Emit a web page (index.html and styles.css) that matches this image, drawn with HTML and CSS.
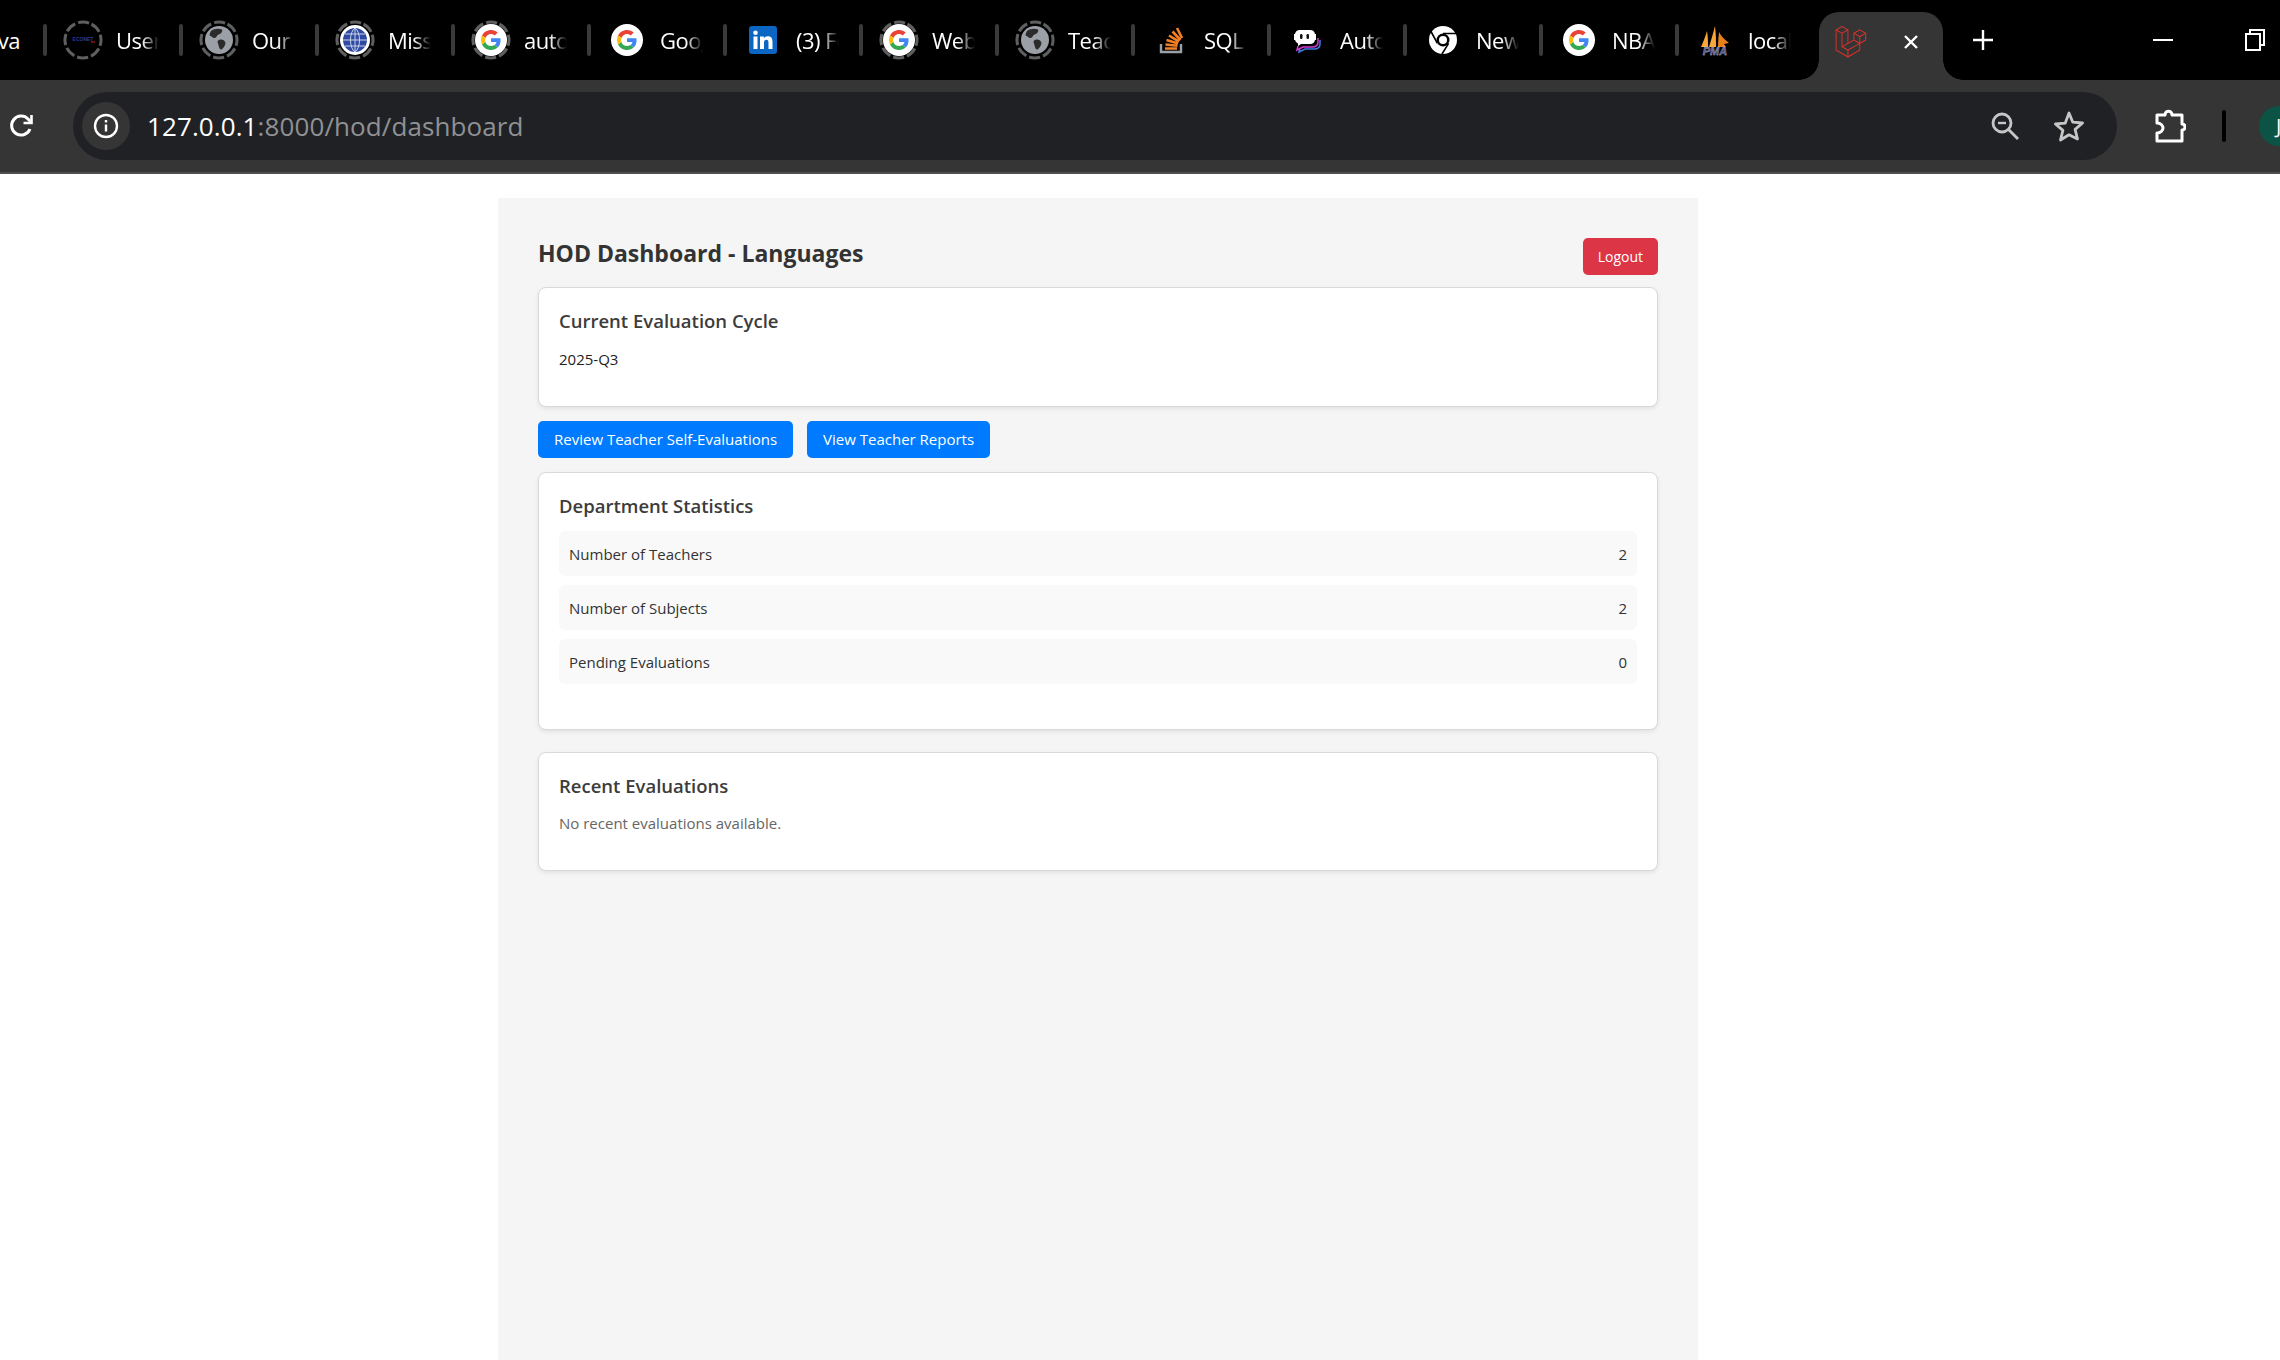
FILE: index.html
```html
<!DOCTYPE html>
<html lang="en">
<head>
  <meta charset="UTF-8" />
  <title>HOD Dashboard</title>
  <link rel="stylesheet" href="styles.css">
</head>
<body>

  <!-- shared favicons -->
  <svg class="defs" width="0" height="0">
    <symbol id="ring" viewBox="0 0 40 40">
      <circle cx="20" cy="20" r="18" fill="none" stroke="#5f5f5f" stroke-width="3" stroke-dasharray="11 3.1" transform="rotate(-62 20 20)"/>
    </symbol>
    <symbol id="google" viewBox="0 0 64 64">
      <circle cx="32" cy="32" r="32" fill="#fff"/>
      <g transform="translate(12 12) scale(.833)">
        <path fill="#EA4335" d="M24 9.5c3.54 0 6.71 1.22 9.21 3.6l6.85-6.85C35.9 2.38 30.47 0 24 0 14.62 0 6.51 5.38 2.56 13.22l7.98 6.19C12.43 13.72 17.74 9.5 24 9.5z"/>
        <path fill="#4285F4" d="M46.98 24.55c0-1.57-.15-3.09-.38-4.55H24v9.02h12.94c-.58 2.96-2.26 5.48-4.78 7.18l7.73 6c4.51-4.18 7.09-10.36 7.09-17.65z"/>
        <path fill="#FBBC05" d="M10.53 28.59c-.48-1.45-.76-2.99-.76-4.59s.27-3.14.76-4.59l-7.98-6.19C.92 16.46 0 20.12 0 24c0 3.88.92 7.54 2.56 10.78l7.97-6.19z"/>
        <path fill="#34A853" d="M24 48c6.48 0 11.93-2.13 15.89-5.81l-7.73-6c-2.15 1.45-4.92 2.3-8.16 2.3-6.26 0-11.57-4.22-13.47-9.91l-7.98 6.19C6.51 42.62 14.62 48 24 48z"/>
      </g>
    </symbol>
    <symbol id="globe" viewBox="0 0 32 32">
      <circle cx="16" cy="16" r="14" fill="#9aa0a6"/>
      <path fill="#2b2b2b" d="M8 7c3-2.500 8-3 11-1.500 1 2-1 4.500-3.500 5-2 .5-1.500 3-3.500 3.500S8.500 12 6.500 11.500C6.800 10 7 8.500 8 7zM15 16.500c2-1.500 5-1 6.500.5 1.500 1.500 1 3.500 0 5-1 1.500-2 3.500-4 3.500-1.500-1-1.500-3-2-4.500-.5-1.500-1.500-3-.5-4.500z"/>
    </symbol>
  </svg>

  <div class="tabstrip">
    <div class="tab tab-first"><span class="tab-title">Java</span></div>
    <div class="tab">
      <svg class="ring"><use href="#ring"/></svg>
      <svg class="favicon" viewBox="0 0 32 32"><text x="16" y="17" class="econet">ECONET</text><path d="M24 18h4" stroke="#c22" stroke-width="1"/></svg>
      <span class="tab-title">Users</span>
    </div>
    <div class="tab">
      <svg class="ring"><use href="#ring"/></svg>
      <svg class="favicon"><use href="#globe"/></svg>
      <span class="tab-title">Our</span>
    </div>
    <div class="tab">
      <svg class="ring"><use href="#ring"/></svg>
      <svg class="favicon" viewBox="0 0 32 32">
        <circle cx="16" cy="16" r="15" fill="#fff"/>
        <circle cx="16" cy="16" r="12" fill="#2f4aa0"/>
        <path d="M4 16h24M16 4v24M6 10h20M6 22h20M16 4c-6 4-6 20 0 24M16 4c6 4 6 20 0 24" fill="none" stroke="#c9d3ee" stroke-width="1"/>
      </svg>
      <span class="tab-title">Mission</span>
    </div>
    <div class="tab">
      <svg class="ring"><use href="#ring"/></svg>
      <svg class="favicon"><use href="#google"/></svg>
      <span class="tab-title">auto</span>
    </div>
    <div class="tab">
      <svg class="favicon"><use href="#google"/></svg>
      <span class="tab-title">Google</span>
    </div>
    <div class="tab">
      <svg class="favicon" viewBox="0 0 32 32">
        <rect x="2" y="2" width="28" height="28" rx="3" fill="#0a66c2"/>
        <path fill="#fff" d="M6.500 12.500h4V25h-4zM8.500 6.500a2.300 2.300 0 1 1 0 4.600 2.300 2.300 0 0 1 0-4.600zM13 12.500h3.800v1.800c.7-1.200 2.200-2.100 4-2.100 3.700 0 4.700 2.300 4.700 5.700V25h-4v-6.300c0-1.700-.5-3-2-3-1.700 0-2.500 1.200-2.500 3V25h-4z"/>
      </svg>
      <span class="tab-title">(3) Feed</span>
    </div>
    <div class="tab">
      <svg class="ring"><use href="#ring"/></svg>
      <svg class="favicon"><use href="#google"/></svg>
      <span class="tab-title">Web</span>
    </div>
    <div class="tab">
      <svg class="ring"><use href="#ring"/></svg>
      <svg class="favicon"><use href="#globe"/></svg>
      <span class="tab-title">Teach</span>
    </div>
    <div class="tab">
      <svg class="favicon" viewBox="0 0 32 32">
        <path d="M6 20v8h20v-8" fill="none" stroke="#9aa0a6" stroke-width="2.400"/>
        <path d="M10 24.500h12M10.500 20.500l12 1.200M11.500 16l11.600 3.400M14 11.500l10 6.200M17.500 7.500l8 8.500M22 4l5 10" fill="none" stroke="#f48024" stroke-width="2.600"/>
      </svg>
      <span class="tab-title">SQL</span>
    </div>
    <div class="tab">
      <svg class="favicon" viewBox="0 0 32 32">
        <path d="M9 24l-1 4 6-3h9c4 0 6-2 6-5v-4" fill="none" stroke="#3f7be0" stroke-width="1.500"/>
        <path d="M7 22l-1 4 6-3h9c4 0 6-2 6-5v-4" fill="none" stroke="#d63bd6" stroke-width="1.500"/>
        <path fill="#fff" d="M9 6h10a5 5 0 0 1 5 4h1v6h-1a5 5 0 0 1-5 4h-9l-3 2v-2.500A5 5 0 0 1 4 16H3v-6h1a5 5 0 0 1 5-4z"/>
        <rect x="9" y="10" width="2.500" height="5" rx="1.200" fill="#111"/>
        <rect x="15.500" y="10" width="2.500" height="5" rx="1.200" fill="#111"/>
      </svg>
      <span class="tab-title">Auto</span>
    </div>
    <div class="tab">
      <svg class="favicon" viewBox="0 0 32 32">
        <circle cx="16" cy="16" r="14" fill="#fff"/>
        <circle cx="16" cy="16" r="6.500" fill="#000"/>
        <circle cx="16" cy="16" r="4" fill="#fff"/>
        <path d="M16 9.500h13.500M10.400 19.300L4 7.500M21.600 19.300L15 30" stroke="#000" stroke-width="1.600" fill="none"/>
      </svg>
      <span class="tab-title">New</span>
    </div>
    <div class="tab">
      <svg class="favicon"><use href="#google"/></svg>
      <span class="tab-title">NBA</span>
    </div>
    <div class="tab tab-last">
      <svg class="favicon favicon-pma" viewBox="0 0 32 32">
        <path fill="#f9a63a" d="M2 23c2-5 4-9 6-16 1 6 1 11 1 16zM10 23c2-7 4-13 6-21 1 8 1 14 1 21z"/>
        <path fill="#e8811a" d="M19 23c0-5 .5-10 1-15 2 4 6 8 10 11l-5 1 2 3z"/>
        <text x="16" y="31" class="pma">PMA</text>
      </svg>
      <span class="tab-title">localhost</span>
    </div>
    <div class="tab-active">
      <svg class="favicon" viewBox="0 0 50 52">
        <path fill="#d8322a" d="M49.626 11.564a.809.809 0 0 1 .028.209v10.972a.8.8 0 0 1-.402.694l-9.209 5.302V39.25c0 .286-.152.55-.4.694L20.42 51.01c-.044.025-.092.041-.14.058-.018.006-.035.017-.054.022a.805.805 0 0 1-.41 0c-.022-.006-.042-.018-.063-.026-.044-.016-.09-.03-.132-.054L.402 39.944A.801.801 0 0 1 0 39.25V6.334c0-.072.01-.142.028-.21.006-.023.02-.044.028-.067.015-.042.029-.085.051-.124.015-.026.037-.047.055-.071.023-.032.044-.065.071-.093.023-.023.053-.04.079-.06.029-.024.055-.05.088-.069h.001l9.61-5.533a.802.802 0 0 1 .8 0l9.61 5.533h.002c.032.02.059.045.088.068.026.02.055.038.078.06.028.029.048.062.072.094.017.024.04.045.054.071.023.04.036.082.052.124.008.023.022.044.028.068a.809.809 0 0 1 .028.209v20.559l8.008-4.611v-10.51c0-.07.01-.141.028-.208.007-.024.02-.045.028-.068.016-.042.03-.085.052-.124.015-.026.037-.047.054-.071.024-.032.044-.065.072-.093.023-.023.052-.04.078-.06.03-.024.056-.05.088-.069h.001l9.611-5.533a.801.801 0 0 1 .8 0l9.61 5.533c.034.02.06.045.09.068.025.02.054.038.077.06.028.029.048.062.072.094.018.024.04.045.054.071.023.039.036.082.052.124.009.023.022.044.028.068zm-1.574 10.718v-9.124l-3.363 1.936-4.646 2.675v9.124l8.01-4.611zm-9.61 16.505v-9.13l-4.57 2.61-13.05 7.448v9.216l17.62-10.144zM1.602 7.719v31.068L19.22 48.93v-9.214l-9.204-5.209-.003-.002-.004-.002c-.031-.018-.057-.044-.086-.066-.025-.02-.054-.036-.076-.058l-.002-.003c-.026-.025-.044-.056-.066-.084-.02-.027-.044-.05-.06-.078l-.001-.003c-.018-.03-.029-.066-.042-.1-.013-.03-.03-.058-.038-.09v-.001c-.01-.038-.012-.078-.016-.117-.004-.03-.012-.06-.012-.09v-.002-21.481L4.965 9.654 1.602 7.72zm8.81-5.994L2.405 6.334l8.005 4.609 8.006-4.61-8.006-4.608zm4.164 28.764l4.645-2.674V7.719l-3.363 1.936-4.646 2.675v20.096l3.364-1.937zM39.243 7.164l-8.006 4.609 8.006 4.609 8.005-4.61-8.005-4.608zm-.801 10.605l-4.646-2.675-3.363-1.936v9.124l4.645 2.674 3.364 1.937v-9.124zM20.02 38.33l11.743-6.704 5.87-3.35-8-4.606-9.211 5.303-8.395 4.833 7.993 4.524z"/>
      </svg>
      <svg class="tab-close" viewBox="0 0 16 16"><path d="M2 2l12 12M14 2L2 14" stroke="#fff" stroke-width="2.400"/></svg>
    </div>
    <svg class="new-tab" viewBox="0 0 20 20"><path d="M10 0v20M0 10h20" stroke="#fff" stroke-width="2.400"/></svg>
    <div class="win-btns">
      <svg class="win-min" viewBox="0 0 20 2"><path d="M0 1h20" stroke="#fff" stroke-width="2"/></svg>
      <svg class="win-restore" viewBox="0 0 20 22" fill="none" stroke="#fff" stroke-width="2"><rect x="1" y="5" width="14" height="16"/><path d="M5 5V1h14v15h-4"/></svg>
    </div>
  </div>

  <div class="toolbar">
    <svg class="reload" viewBox="0 0 26 26" fill="none" stroke="#fff" stroke-width="3">
      <path d="M22 16a9.500 9.500 0 1 1-2-10l2.500 2.500"/>
      <path d="M23.500 2v8h-8" stroke-width="2.600"/>
    </svg>
    <div class="omnibox">
      <div class="site-info">
        <svg viewBox="0 0 26 26" width="26" height="26" fill="none" stroke="#fff" stroke-width="2.400">
          <circle cx="13" cy="13" r="11"/>
          <path d="M13 11.500v7M13 7v2.600"/>
        </svg>
      </div>
      <div class="url">127.0.0.1<span class="url-rest">:8000/hod/dashboard</span></div>
      <svg class="omni-icon" viewBox="0 0 28 28" fill="none" stroke="#c4c7c5" stroke-width="2.800">
        <circle cx="11" cy="11" r="9"/>
        <path d="M17.500 17.500L27 27" />
        <path d="M7 11h8" stroke-width="2.400"/>
      </svg>
      <svg class="omni-icon omni-star" viewBox="0 0 32 32" fill="none" stroke="#c4c7c5" stroke-width="2.800" stroke-linejoin="round">
        <path d="M16 3l3.800 9.200 9.800.8-7.500 6.400 2.400 9.600L16 24.800 7.500 30l2.400-9.600L2.400 14l9.800-.8z"/>
      </svg>
    </div>
    <svg class="ext-icon" viewBox="0 0 32 36" fill="none" stroke="#fff" stroke-width="3" stroke-linejoin="round">
      <path d="M3 7h8c0-5 7-5 7 0h10v9c4 0 4 6 0 6v11H3v-8c4 0 6-3 6-5s-2-5-6-5z"/>
    </svg>
    <div class="tool-sep"></div>
    <div class="avatar">J</div>
  </div>

  <div class="page">
    <div class="panel">
      <div class="panel-head">
        <h1>HOD Dashboard - Languages</h1>
        <a href="#" class="btn btn-red">Logout</a>
      </div>

      <div class="card card-cycle">
        <h3>Current Evaluation Cycle</h3>
        <p>2025-Q3</p>
      </div>

      <div class="actions">
        <a href="#" class="btn btn-blue">Review Teacher Self-Evaluations</a>
        <a href="#" class="btn btn-blue">View Teacher Reports</a>
      </div>

      <div class="card card-stats">
        <h3>Department Statistics</h3>
        <ul class="stats">
          <li><span>Number of Teachers</span><span>2</span></li>
          <li><span>Number of Subjects</span><span>2</span></li>
          <li><span>Pending Evaluations</span><span>0</span></li>
        </ul>
      </div>

      <div class="card">
        <h3>Recent Evaluations</h3>
        <p class="muted">No recent evaluations available.</p>
      </div>
    </div>
  </div>

</body>
</html>
```

FILE: styles.css
```css
html, body {
  margin: 0;
  padding: 0;
  height: 1360px;
  overflow: hidden;
  background: #fff;
  font-family: "Open Sans", "Noto Sans", sans-serif;
}

.defs { position: absolute; }

/* browser chrome */
.tabstrip {
  display: flex;
  align-items: stretch;
  height: 80px;
  background: #000;
  overflow: hidden;
}

.tab {
  position: relative;
  flex: 0 0 136px;
  display: flex;
  align-items: center;
  height: 80px;
  padding-left: 22px;
  box-sizing: border-box;
}

.tab::after {
  content: "";
  position: absolute;
  right: -2px;
  top: 24px;
  width: 4px;
  height: 32px;
  border-radius: 2px;
  background: #3a3a3a;
}

.tab-first {
  flex-basis: 45px;
  padding-left: 0;
  justify-content: flex-end;
  overflow: visible;
}

.tab-first .tab-title {
  width: 20px;
  margin: 0 25px 0 0;
  direction: rtl;
  -webkit-mask-image: none;
  mask-image: none;
}

.tab-last { flex-basis: 142px; }
.tab-last::after { display: none; }

.ring {
  position: absolute;
  left: 18px;
  top: 20px;
  width: 40px;
  height: 40px;
}

.favicon {
  flex: none;
  width: 32px;
  height: 32px;
  margin-top: -1px;
  position: relative;
}

.tab-title {
  margin-left: 17px;
  width: 43px;
  overflow: hidden;
  white-space: nowrap;
  color: #fff;
  font-size: 22px;
  font-weight: 400;
  letter-spacing: -0.5px;
  -webkit-mask-image: linear-gradient(to right, #000 60%, transparent 100%);
  mask-image: linear-gradient(to right, #000 60%, transparent 100%);
}

.econet {
  font: bold 5px "Liberation Sans", sans-serif;
  fill: #2a3a9a;
  text-anchor: middle;
}

.pma {
  font: italic bold 11px "Liberation Sans", sans-serif;
  fill: #4a4f8a;
  stroke: #ccd;
  stroke-width: .3px;
  text-anchor: middle;
}

.tab-active {
  position: relative;
  flex: 0 0 124px;
  display: flex;
  align-items: center;
  height: 68px;
  margin-top: 12px;
  padding-left: 16px;
  box-sizing: border-box;
  background: #353535;
  border-radius: 20px 20px 0 0;
}

.tab-active::before, .tab-active::after {
  content: "";
  position: absolute;
  bottom: 0;
  width: 20px;
  height: 20px;
  background: radial-gradient(circle at 0 0, transparent 19.500px, #353535 20px);
}

.tab-active::before { left: -20px; }

.tab-active::after {
  right: -20px;
  background: radial-gradient(circle at 100% 0, transparent 19.500px, #353535 20px);
}

.tab-active .favicon { margin-top: -8px; }

.tab-close {
  width: 16px;
  height: 16px;
  margin-left: 36px;
  margin-top: -8px;
}

.new-tab {
  flex: none;
  width: 20px;
  height: 20px;
  margin: 30px 0 0 30px;
}

.win-btns {
  flex: 1;
  display: flex;
  align-items: center;
  justify-content: flex-end;
  gap: 72px;
  padding-right: 15px;
}

.win-min { width: 20px; height: 2px; }
.win-restore { width: 20px; height: 22px; }

.toolbar {
  display: flex;
  align-items: center;
  height: 92px;
  background: #353535;
  border-bottom: 2px solid #4f4f4f;
  overflow: hidden;
}

.reload {
  flex: none;
  width: 26px;
  height: 26px;
  margin-left: 8px;
}

.omnibox {
  flex: none;
  display: flex;
  align-items: center;
  width: 2044px;
  height: 68px;
  margin-left: 39px;
  box-sizing: border-box;
  padding-left: 9px;
  background: #202124;
  border-radius: 34px;
}

.site-info {
  flex: none;
  display: flex;
  align-items: center;
  justify-content: center;
  width: 48px;
  height: 48px;
  border-radius: 50%;
  background: #353535;
}

.url {
  flex: 1;
  margin-left: 17px;
  color: #fff;
  font-size: 26px;
  letter-spacing: .1px;
}

.url-rest { color: #8f9194; }

.omni-icon {
  flex: none;
  width: 28px;
  height: 28px;
  margin-right: 34px;
}

.omni-star {
  width: 32px;
  height: 32px;
  margin-right: 32px;
}

.ext-icon {
  flex: none;
  width: 32px;
  height: 36px;
  margin-left: 37px;
}

.tool-sep {
  flex: none;
  width: 4px;
  height: 32px;
  margin-left: 36px;
  border-radius: 2px;
  background: #000;
}

.avatar {
  flex: none;
  width: 40px;
  height: 40px;
  margin-left: 33px;
  border-radius: 50%;
  background: #0b5345;
  color: #fff;
  font-size: 20px;
  line-height: 40px;
  text-align: left;
  text-indent: 17px;
}

/* page */
.page { padding-top: 24px; }

.panel {
  width: 1200px;
  height: 1162px;
  margin-left: 498px;
  box-sizing: border-box;
  padding: 40px;
  background: #f5f5f5;
}

.panel-head {
  display: flex;
  justify-content: space-between;
  align-items: flex-start;
  margin-bottom: 12px;
}

h1 {
  margin: 0;
  color: #333;
  font-size: 23px;
  font-weight: 700;
  line-height: 30px;
}

.btn {
  display: inline-block;
  height: 37px;
  line-height: 37px;
  border-radius: 5px;
  color: #fff;
  text-decoration: none;
  white-space: nowrap;
}

.btn-red {
  padding: 0 15px;
  background: #dc3545;
  font-size: 14px;
}

.btn-blue {
  padding: 0 16px;
  background: #007bff;
  font-size: 15px;
}

.card {
  background: #fff;
  border: 1px solid #d9d9d9;
  border-radius: 8px;
  padding: 20px;
  box-shadow: 0 2px 4px rgba(0,0,0,0.08);
}

.card h3 {
  margin: 0 0 12px;
  color: #3c3c3c;
  font-size: 18.500px;
  font-weight: 600;
  line-height: 26px;
}

.card p {
  margin: 0 0 14px;
  color: #222;
  font-size: 15px;
  line-height: 26px;
}

.card p.muted {
  margin-top: -1px;
  color: #666;
}

.card-cycle { margin-bottom: 14px; }

.actions {
  display: flex;
  gap: 14px;
  margin-bottom: 14px;
}

.card-stats { margin-bottom: 22px; }

.stats {
  list-style: none;
  margin: 0 0 25px;
  padding: 0;
}

.stats li {
  display: flex;
  justify-content: space-between;
  align-items: center;
  height: 45px;
  margin-bottom: 9px;
  padding: 0 10px;
  border-radius: 6px;
  background: #f9f9f9;
  color: #333;
  font-size: 15px;
}

.stats li:last-child { margin-bottom: 0; }
```
